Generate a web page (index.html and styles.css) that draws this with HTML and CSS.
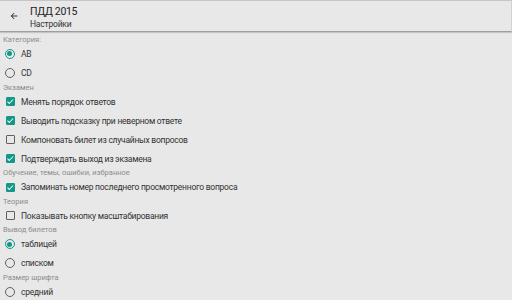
FILE: index.html
```html
<!DOCTYPE HTML>
<html>

<head>
  <meta charset="utf-8">
  <link rel="stylesheet" href="styles.css">
</head>

<body>

  <div class="toolbar">
    <svg class="back" width="10" height="10" viewBox="0 0 24 24">
      <path d="M20 11H7.8l5.6-5.6L12 4l-8 8 8 8 1.4-1.4L7.8 13H20z" fill="#333" />
    </svg>
    <div class="titles">
      <div class="title">ПДД 2015</div>
      <div class="subtitle">Настройки</div>
    </div>
  </div>

  <div class="prefs">
    <div class="cat">Категория:</div>
    <div class="item"><span class="radio on"></span>AB</div>
    <div class="item"><span class="radio"></span>CD</div>

    <div class="cat">Экзамен</div>
    <div class="item"><span class="check on"></span>Менять порядок ответов</div>
    <div class="item"><span class="check on"></span>Выводить подсказку при неверном ответе</div>
    <div class="item"><span class="check"></span>Компоновать билет из случайных вопросов</div>
    <div class="item"><span class="check on"></span>Подтверждать выход из экзамена</div>

    <div class="cat">Обучение, темы, ошибки, избранное</div>
    <div class="item"><span class="check on"></span>Запоминать номер последнего просмотренного вопроса</div>

    <div class="cat">Теория</div>
    <div class="item"><span class="check"></span>Показывать кнопку масштабирования</div>

    <div class="cat">Вывод билетов</div>
    <div class="item"><span class="radio on"></span>таблицей</div>
    <div class="item"><span class="radio"></span>списком</div>

    <div class="cat">Размер шрифта</div>
    <div class="item"><span class="radio"></span>средний</div>
  </div>

</body>

</html>
```

FILE: styles.css
```css
body {
  margin: 0;
  background: #e8e8e8;
  font-family: Roboto, "Noto Sans", sans-serif;
  overflow: hidden;
}

.toolbar {
  display: flex;
  align-items: center;
  height: 30px;
  border-top: 1px solid #c6c6c6;
  border-right: 1px solid #d2d2d2;
  border-bottom: 1px solid #9e9e9e;
  box-shadow: 0 1px 1px rgba(0, 0, 0, .15);
  background: #e8e8e8;
}

.back {
  margin: 0 11px 0 9px;
}

.titles {
  padding-top: 3px;
}

.title {
  font-size: 10.5px;
  letter-spacing: -0.3px;
  color: #222;
  line-height: 12px;
}

.subtitle {
  font-size: 8.5px;
  letter-spacing: -0.2px;
  color: #333;
  line-height: 12px;
}

.prefs {
  padding-top: 3px;
}

.cat {
  height: 9.6px;
  line-height: 9.6px;
  padding-left: 3px;
  font-size: 7.5px;
  color: #8c8c8c;
}

.item {
  display: flex;
  align-items: center;
  height: 19px;
  font-size: 8.5px;
  letter-spacing: -0.25px;
  color: #333;
}

.check,
.radio {
  box-sizing: border-box;
  flex: none;
  margin: 0 6px 0 6px;
}

.check {
  width: 9px;
  height: 9px;
  border: 1.5px solid #616161;
  border-radius: 1px;
  position: relative;
}

.check.on {
  border-color: #149688;
  background: #149688;
}

.check.on::after {
  content: "";
  position: absolute;
  left: 1.6px;
  top: 0;
  width: 2px;
  height: 4.5px;
  border: solid #fff;
  border-width: 0 1.3px 1.3px 0;
  transform: rotate(45deg);
}

.radio {
  width: 10px;
  height: 10px;
  margin-left: 5px;
  border: 1.3px solid #616161;
  border-radius: 50%;
  position: relative;
}

.radio.on {
  border-color: #149688;
}

.radio.on::after {
  content: "";
  position: absolute;
  left: 1.2px;
  top: 1.2px;
  width: 5px;
  height: 5px;
  border-radius: 50%;
  background: #149688;
}
```
